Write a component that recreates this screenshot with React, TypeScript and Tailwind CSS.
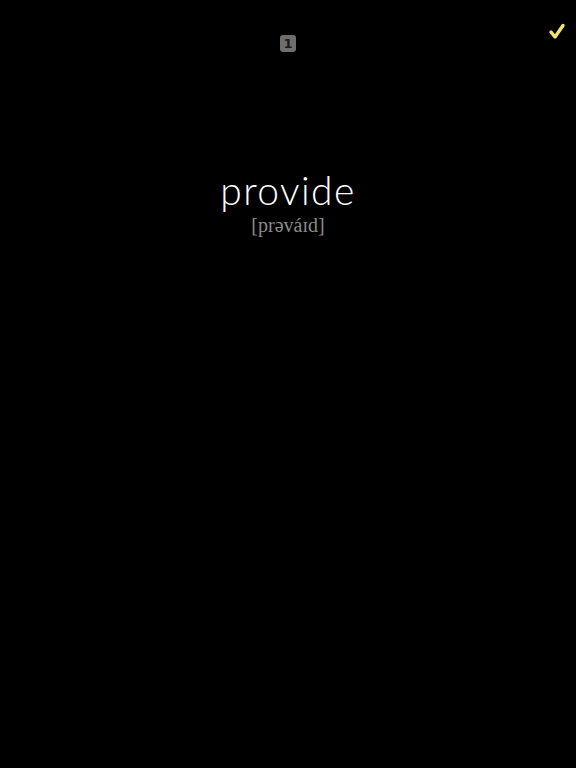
import React from 'react';

export default function App() {
  return (
    <div className="relative w-[576px] h-[768px] bg-black overflow-hidden">
      {/* Top bar */}
      <div className="flex items-start justify-center pt-[35px] h-[60px]">
        <span
          className="flex items-center justify-center w-[16px] h-[17px] rounded-[3px] bg-[#6e6e6e] text-[13px] font-bold text-[#1a1a1a] leading-none"
          style={{ fontFamily: '"DejaVu Sans", sans-serif' }}
        >
          1
        </span>
      </div>
      <button className="absolute top-[22px] right-[10px] p-0">
        <svg width="18" height="18" viewBox="0 0 18 18">
          <path
            d="M3 10 L7 15 L15 3.5"
            fill="none"
            stroke="#f2e46b"
            strokeWidth="3.4"
            strokeLinecap="round"
            strokeLinejoin="round"
          />
        </svg>
      </button>

      {/* Word */}
      <div className="flex flex-col items-center pt-[108px]">
        <p
          className="text-white text-[39px] font-light leading-[44px] tracking-[1.4px]"
          style={{ fontFamily: 'Lato, "Noto Sans", sans-serif' }}
        >
          provide
        </p>
        <p
          className="text-[#8a8a8a] text-[20px] leading-[24px] mt-[1px]"
          style={{ fontFamily: '"Liberation Serif", serif' }}
        >
          [prəváɪd]
        </p>
      </div>
    </div>
  );
}
